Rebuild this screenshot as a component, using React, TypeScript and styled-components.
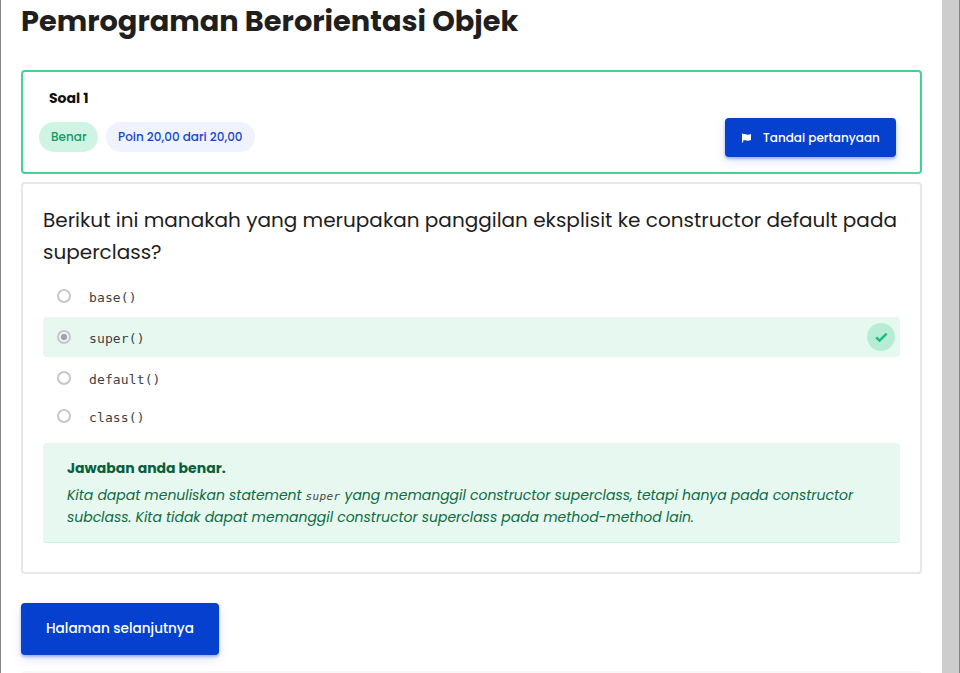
import React from 'react';
import styled, { createGlobalStyle } from 'styled-components';

const GlobalStyle = createGlobalStyle`
  *, *::before, *::after { box-sizing: border-box; }
  body {
    margin: 0;
    background: #fff;
    color: #1f1f1f;
    font-family: Poppins, Inter, sans-serif;
    overflow: hidden;
  }
  h1, h2, p { margin: 0; }
`;

const Window = styled.div`
  display: flex;
  height: 673px;
  overflow: hidden;
  border-left: 1px solid #868686;
  border-right: 1px solid #868686;
`;

const Page = styled.main`
  flex: 1;
  min-width: 0;
  display: flex;
  flex-direction: column;
  align-items: stretch;
  padding: 0 20px;
`;

const ScrollTrack = styled.div`
  flex: none;
  width: 17px;
  background: #cdcdcd;
`;

const Title = styled.h1`
  flex: none;
  height: 70px;
  padding-top: 1px;
  font-size: 28.8px;
  font-weight: 700;
  line-height: 40px;
  white-space: nowrap;
`;

const Card = styled.section<{ $tone: string; $height: number }>`
  flex: none;
  height: ${(p) => p.$height}px;
  border: 2px solid ${(p) => p.$tone};
  border-radius: 4px;
  margin-bottom: 8px;
`;

const InfoCard = styled(Card)`
  display: flex;
  justify-content: space-between;
  align-items: flex-start;
  padding: 16px 24px 0 16px;
`;

const QuestionNo = styled.h2`
  padding-left: 10px;
  font-size: 14px;
  font-weight: 700;
  line-height: 20px;
  color: #111;
`;

const Badges = styled.div`
  display: flex;
  gap: 8px;
  margin-top: 14px;
`;

const Badge = styled.span<{ $bg: string; $fg: string; $width: number }>`
  width: ${(p) => p.$width}px;
  height: 30px;
  border-radius: 15px;
  padding-left: 12px;
  background: ${(p) => p.$bg};
  color: ${(p) => p.$fg};
  font-size: 12px;
  font-weight: 500;
  line-height: 30px;
  white-space: nowrap;
`;

const Button = styled.button`
  display: flex;
  align-items: center;
  border: 0;
  border-radius: 4px;
  background: #0540ce;
  color: #fff;
  font-family: inherit;
  font-weight: 500;
  white-space: nowrap;
  box-shadow: 0 2px 3px rgba(5, 64, 206, 0.35), 0 4px 12px rgba(5, 64, 206, 0.12);
`;

const FlagButton = styled(Button)`
  width: 171px;
  height: 39px;
  margin-top: 30px;
  padding: 0 0 0 17px;
  gap: 12px;
  font-size: 12px;
`;

const NextButton = styled(Button)`
  flex: none;
  width: 198px;
  height: 52px;
  margin-top: 21px;
  padding: 0 0 0 25px;
  font-size: 13.6px;
`;

const QuestionCard = styled(Card)`
  padding: 20px 20px 0;
`;

const Question = styled.p`
  font-size: 20px;
  line-height: 32px;
  white-space: nowrap;
  color: #1d1d1d;
`;

const Options = styled.div`
  display: flex;
  flex-direction: column;
  margin-top: 9px;
`;

const Option = styled.label<{ $picked?: boolean }>`
  display: flex;
  align-items: center;
  height: ${(p) => (p.$picked ? 40 : 38)}px;
  margin: ${(p) => (p.$picked ? '2px 0' : '0')};
  padding: 0 5px 0 14px;
  border-radius: 4px;
  background: ${(p) => (p.$picked ? '#e7f8f1' : 'transparent')};
`;

const Radio = styled.span<{ $picked?: boolean }>`
  width: 14px;
  height: 14px;
  border: 2px solid #c6c6cd;
  border-radius: 50%;
  background: ${(p) =>
    p.$picked ? 'radial-gradient(circle, #a3a3b0 0 2.8px, #f0f3f5 3.4px)' : '#fff'};
`;

const Code = styled.code`
  margin-left: 18px;
  padding-top: 3px;
  font-family: Consolas, 'DejaVu Sans Mono', monospace;
  font-size: 13px;
  line-height: 18px;
  letter-spacing: 0.12px;
  color: #3f3f3f;
`;

const Check = styled.span`
  display: flex;
  align-items: center;
  justify-content: center;
  width: 28px;
  height: 28px;
  margin-left: auto;
  border-radius: 50%;
  background: #b7edd6;
`;

const Feedback = styled.div`
  height: 100px;
  margin-top: 8px;
  padding: 14px 24px 0;
  border-radius: 4px;
  border-bottom: 1px solid #c6f1e0;
  background: #e7f8f1;
  color: #0c6b42;
  white-space: nowrap;
`;

const Verdict = styled.p`
  font-size: 14px;
  font-weight: 700;
  line-height: 22px;
  color: #06603a;
`;

const Explanation = styled.p`
  margin-top: 5px;
  font-size: 14px;
  font-style: italic;
  line-height: 22px;
  letter-spacing: -0.03px;
`;

const InlineCode = styled.code`
  display: inline-block;
  width: 35px;
  margin: 0 4px 0 4px;
  font-family: Consolas, 'DejaVu Sans Mono', monospace;
  font-size: 11px;
  line-height: 12px;
  letter-spacing: 0.35px;
  color: #444;
`;

const NextPanel = styled.div`
  flex: none;
  height: 20px;
  margin-top: 16px;
  border-radius: 4px;
  background: #f8f8f8;
`;

const FlagIcon = () => (
  <svg width="9" height="10" viewBox="0 0 9 10" fill="#fff">
    <path d="M0 .5h1v.8C2.200.7 3.400.9 4.600 1.400c1.400.5 2.500.4 4.400-.3v6c-1.800.8-3.200.9-4.600.4C3.100 7 2.200 7 1.100 7.600V9.500H0z" />
  </svg>
);

const CheckIcon = () => (
  <svg width="13" height="11" viewBox="0 0 13 11" fill="none" stroke="#18bd78" strokeWidth="2.5">
    <path d="M1.200 5.300l3.400 3.300 7-7" />
  </svg>
);

const options = [
  { text: 'base()' },
  { text: 'super()', picked: true },
  { text: 'default()' },
  { text: 'class()' },
];

export default function App() {
  return (
    <>
      <GlobalStyle />
      <Window>
        <Page>
          <Title>Pemrograman Berorientasi Objek</Title>
          <InfoCard $tone="#42d392" $height={104}>
            <div>
              <QuestionNo>Soal 1</QuestionNo>
              <Badges>
                <Badge $bg="#cff4e4" $fg="#159a62" $width={59}>Benar</Badge>
                <Badge $bg="#eff3ff" $fg="#1546d2" $width={149}>Poin 20,00 dari 20,00</Badge>
              </Badges>
            </div>
            <FlagButton><FlagIcon />Tandai pertanyaan</FlagButton>
          </InfoCard>
          <QuestionCard $tone="#e7e7e7" $height={392}>
            <Question>
              Berikut ini manakah yang merupakan panggilan eksplisit ke constructor default pada
              <br />
              superclass?
            </Question>
            <Options>
              {options.map((o) => (
                <Option key={o.text} $picked={o.picked}>
                  <Radio $picked={o.picked} />
                  <Code>{o.text}</Code>
                  {o.picked && <Check><CheckIcon /></Check>}
                </Option>
              ))}
            </Options>
            <Feedback>
              <Verdict>Jawaban anda benar.</Verdict>
              <Explanation>
                Kita dapat menuliskan statement<InlineCode>super</InlineCode>yang memanggil constructor superclass, tetapi hanya pada constructor
                <br />
                subclass. Kita tidak dapat memanggil constructor superclass pada method-method lain.
              </Explanation>
            </Feedback>
          </QuestionCard>
          <NextButton>Halaman selanjutnya</NextButton>
          <NextPanel />
        </Page>
        <ScrollTrack />
      </Window>
    </>
  );
}
